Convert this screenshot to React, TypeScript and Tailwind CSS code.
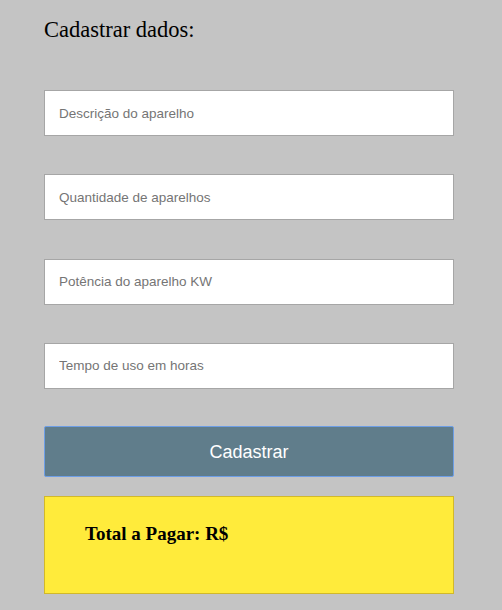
export default function App() {
  const fields = [
    "Descrição do aparelho",
    "Quantidade de aparelhos",
    "Potência do aparelho KW",
    "Tempo de uso em horas",
  ]

  return (
    <div className="min-h-[610px] bg-[#c4c4c4] px-[44px] pt-[17px] pb-4">
      <div className="w-[410px]">
        <h2 className="text-[22.5px] leading-[26px] text-black font-['Liberation_Serif',serif]">
          Cadastrar dados:
        </h2>

        <div className="mt-[47px] flex flex-col gap-[38.3px]">
          {fields.map((f) => (
            <input
              key={f}
              type="text"
              placeholder={f}
              className="h-[46px] w-full border border-[#a6a6a6] bg-white px-[14px] text-[13.5px] font-['Liberation_Sans',Arial,sans-serif] placeholder:text-[#757575] outline-none"
            />
          ))}
        </div>

        <button
          type="button"
          className="mt-[37px] h-[51px] w-full rounded-[2px] border border-[#6d9ee6] bg-[#607d8b] pt-[2px] text-[18px] text-white font-['Liberation_Sans',Arial,sans-serif]"
        >
          Cadastrar
        </button>

        <div className="mt-[19px] h-[98px] border border-[#d1b82a] bg-[#ffeb3b] pl-[40px] pt-[23px]">
          <p className="text-[19px] font-bold text-black font-['Liberation_Serif',serif]">
            Total a Pagar: R$
          </p>
        </div>
      </div>
    </div>
  )
}
